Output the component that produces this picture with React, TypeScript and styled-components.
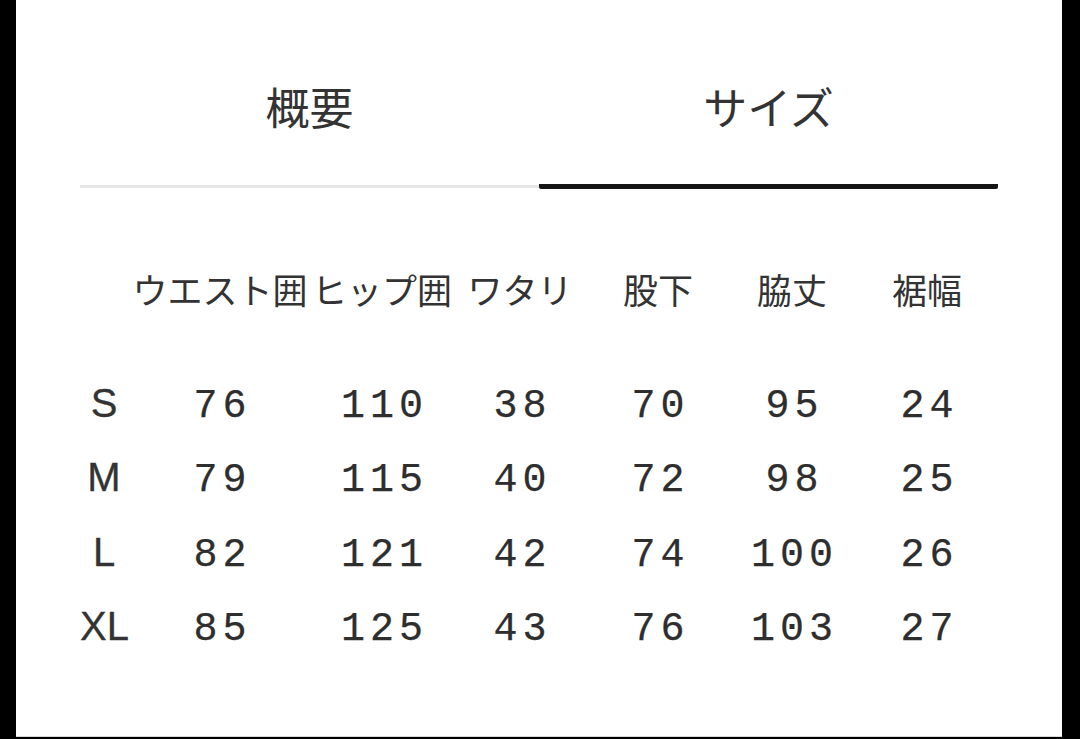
import React from "react";
import styled, { createGlobalStyle } from "styled-components";

const Global = createGlobalStyle`
  html, body { margin: 0; padding: 0; background: #000; }
  body { width: 1080px; height: 739px; overflow: hidden; }
`;

const Card = styled.div`
  margin-left: 16px;
  width: 1046px;
  height: 737px;
  box-sizing: border-box;
  background: #fff;
  padding: 84px 64px 0;
  border-bottom: 1px solid #d8d8d8;
`;

const Tabs = styled.div`
  display: grid;
  grid-template-columns: 1fr 1fr;
  align-items: end;
`;

const Tab = styled.div<{ $active?: boolean }>`
  font-family: "Noto Sans CJK JP", "Noto Sans", sans-serif;
  font-size: 44px;
  line-height: 44px;
  color: #333;
  text-align: center;
  padding-bottom: ${(p) => (p.$active ? "56px" : "57px")};
  border-bottom: ${(p) => (p.$active ? "5px solid #151515" : "3px solid #e6e6e6")};
  margin-bottom: ${(p) => (p.$active ? "0" : "1px")};
  border-radius: ${(p) => (p.$active ? "2px" : "0")};
`;

const Table = styled.div`
  display: grid;
  grid-template-columns: 48px 184px 140px 136px 140px 128px 142px;
  margin-top: 62px;
`;

const HeadCell = styled.div`
  height: 74px;
  display: flex;
  align-items: center;
  justify-content: center;
  font-family: "Noto Sans CJK JP", "Noto Sans", sans-serif;
  font-size: 35px;
  color: #333;
  white-space: nowrap;
  margin-bottom: 42px;
`;

const SizeCell = styled.div`
  height: 74.4px;
  line-height: 72.4px;
  text-align: center;
  font-family: "Liberation Sans", Arial, sans-serif;
  font-size: 40px;
  color: #333;
  -webkit-text-stroke: 0.3px #333;
  white-space: nowrap;
`;

const NumCell = styled.div`
  height: 74.4px;
  line-height: 80px;
  text-align: center;
  font-family: "Liberation Mono", "DejaVu Sans Mono", monospace;
  font-size: 40px;
  letter-spacing: 5px;
  text-indent: 5px;
  color: #2e2e2e;
  -webkit-text-stroke: 0.25px #2e2e2e;
  white-space: nowrap;
`;

const headers = ["", "ウエスト囲", "ヒップ囲", "ワタリ", "股下", "脇丈", "裾幅"];
const rows: [string, number[]][] = [
  ["S", [76, 110, 38, 70, 95, 24]],
  ["M", [79, 115, 40, 72, 98, 25]],
  ["L", [82, 121, 42, 74, 100, 26]],
  ["XL", [85, 125, 43, 76, 103, 27]],
];

export default function App() {
  return (
    <>
      <Global />
      <Card>
        <Tabs>
          <Tab>概要</Tab>
          <Tab $active>サイズ</Tab>
        </Tabs>
        <Table>
          {headers.map((h, i) => (
            <HeadCell key={"h" + i}>{h}</HeadCell>
          ))}
          {rows.map(([size, vals]) => (
            <React.Fragment key={size}>
              <SizeCell>{size}</SizeCell>
              {vals.map((v, j) => (
                <NumCell key={j}>{v}</NumCell>
              ))}
            </React.Fragment>
          ))}
        </Table>
      </Card>
    </>
  );
}
